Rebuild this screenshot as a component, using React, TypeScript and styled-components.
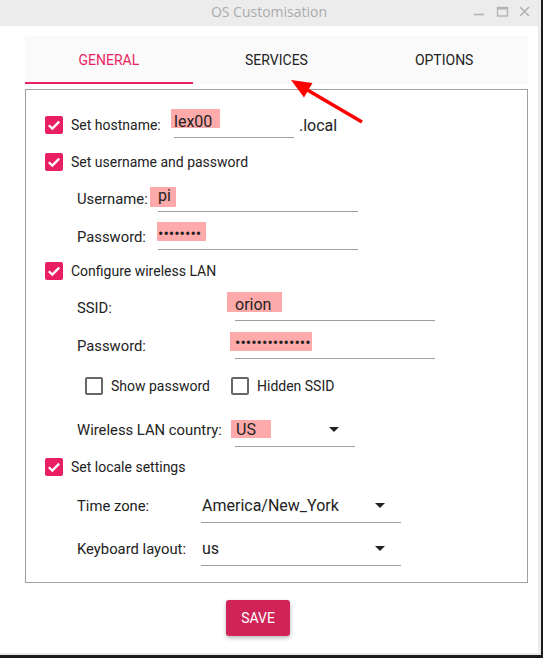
import React from "react";
import styled, { createGlobalStyle } from "styled-components";

const GlobalStyle = createGlobalStyle`
  html, body {
    margin: 0;
    padding: 0;
    background: #1c1c1c;
  }
  body {
    font-family: Roboto, "Liberation Sans", sans-serif;
  }
`;

const PINK = "#e91e63";

const Window = styled.div`
  position: relative;
  width: 538px;
  height: 653px;
  background: #fff;
  border-right: 3px solid #ebebeb;
  border-bottom: 2px solid #ebebeb;
  display: flex;
  flex-direction: column;
`;

const TitleBar = styled.div`
  height: 26px;
  background: #ececec;
  display: grid;
  grid-template-columns: 1fr auto 1fr;
  align-items: center;
`;

const Title = styled.span`
  grid-column: 2;
  margin-bottom: 4px;
  font-family: "Open Sans", sans-serif;
  font-size: 14px;
  color: #ababab;
`;

const Controls = styled.svg`
  grid-column: 3;
  justify-self: end;
  margin-right: 8px;
`;

const Body = styled.div`
  padding: 10px 10px 0 25px;
  display: flex;
  flex-direction: column;
`;

const Tabs = styled.div`
  height: 48px;
  background: #fafafa;
  display: grid;
  grid-template-columns: repeat(3, 1fr);
`;

const Tab = styled.div<{ $active?: boolean }>`
  display: flex;
  align-items: center;
  justify-content: center;
  padding-top: 1px;
  font-size: 14px;
  color: ${(p) => (p.$active ? PINK : "#222")};
  border-bottom: 2px solid ${(p) => (p.$active ? PINK : "transparent")};
`;

const Panel = styled.div`
  margin-top: 5px;
  height: 494px;
  box-sizing: border-box;
  border: 1px solid #9e9e9e;
  padding: 16px 0 0 19px;
  display: flex;
  flex-direction: column;
`;

const Row = styled.div<{ $h: number; $indent?: number }>`
  height: ${(p) => p.$h}px;
  padding-left: ${(p) => p.$indent ?? 0}px;
  display: flex;
  align-items: center;
`;

const Box = styled.span<{ $checked?: boolean }>`
  width: 18px;
  height: 18px;
  box-sizing: border-box;
  border-radius: 2px;
  flex: none;
  display: flex;
  align-items: center;
  justify-content: center;
  background: ${(p) => (p.$checked ? PINK : "#fff")};
  border: ${(p) => (p.$checked ? "none" : "2px solid #676767")};
`;

const CheckText = styled.span<{ $w?: number }>`
  margin-left: 8px;
  font-size: 14px;
  color: #222;
  white-space: nowrap;
  ${(p) => (p.$w ? `width: ${p.$w}px;` : "")}
`;

const Option = styled.span<{ $w?: number }>`
  display: flex;
  align-items: center;
  ${(p) => (p.$w ? `width: ${p.$w}px;` : "")}
`;

const Label = styled.span<{ $w: number }>`
  width: ${(p) => p.$w}px;
  font-size: 14.8px;
  color: #222;
  white-space: nowrap;
`;

const TextField = styled.div<{ $w: number }>`
  position: relative;
  width: ${(p) => p.$w}px;
  height: 26px;
  box-sizing: border-box;
  border-bottom: 1px solid #9e9e9e;
  font-size: 16px;
  line-height: 20px;
  color: #222;
`;

const Combo = styled.div<{ $w: number }>`
  position: relative;
  width: ${(p) => p.$w}px;
  height: 34px;
  box-sizing: border-box;
  border-bottom: 1px solid #9e9e9e;
  padding: 0 16px 0 1px;
  display: flex;
  align-items: center;
  justify-content: space-between;
  font-size: 16px;
  color: #222;
`;

const Value = styled.span`
  position: relative;
`;

const Highlight = styled.span<{ $x: number; $y: number; $w: number; $h: number }>`
  position: absolute;
  left: ${(p) => p.$x}px;
  top: ${(p) => p.$y}px;
  width: ${(p) => p.$w}px;
  height: ${(p) => p.$h}px;
  background: #ffaaaa;
`;

const Suffix = styled.span`
  margin-left: 5px;
  font-size: 16px;
  color: #222;
`;

const Footer = styled.div`
  padding: 17px 0 0 201px;
  display: flex;
`;

const SaveButton = styled.button`
  width: 64px;
  height: 36px;
  border: none;
  border-radius: 3px;
  background: #d02358;
  color: #fff;
  font-family: Roboto, sans-serif;
  font-size: 14px;
  box-shadow: 0 2px 4px rgba(0, 0, 0, 0.28);
`;

const Annotation = styled.svg`
  position: absolute;
  left: 0;
  top: 0;
  pointer-events: none;
`;

const Check: React.FC<{ checked?: boolean }> = ({ checked }) => (
  <Box $checked={checked}>
    {checked && (
      <svg width="18" height="18" viewBox="0 0 18 18">
        <path d="M3.8 9.2 L7.3 12.6 L14.2 5.6" fill="none" stroke="#fff" strokeWidth="2.3" />
      </svg>
    )}
  </Box>
);

const Arrow = () => (
  <svg width="10" height="5" viewBox="0 0 10 5">
    <path d="M0 0 H10 L5 5 Z" fill="#222" />
  </svg>
);

type Mark = { x: number; y: number; w: number; h: number };

const Field: React.FC<{ w: number; value: string; mark?: Mark }> = ({ w, value, mark }) => (
  <TextField $w={w}>
    {mark && <Highlight $x={mark.x} $y={mark.y} $w={mark.w} $h={mark.h} />}
    <Value>{value}</Value>
  </TextField>
);

const Select: React.FC<{ w: number; value: string; mark?: Mark }> = ({ w, value, mark }) => (
  <Combo $w={w}>
    {mark && <Highlight $x={mark.x - 1} $y={mark.y} $w={mark.w} $h={mark.h} />}
    <Value>{value}</Value>
    <Arrow />
  </Combo>
);

const App: React.FC = () => {
  return (
    <>
      <GlobalStyle />
      <Window>
        <TitleBar>
          <Title>OS Customisation</Title>
          <Controls width="58" height="26" viewBox="0 0 58 26">
            <path d="M2 14.5 H12" stroke="#b3b3b3" strokeWidth="1.6" />
            <rect x="25.5" y="7.5" width="10" height="8.5" fill="none" stroke="#b3b3b3" strokeWidth="1.4" />
            <path d="M25.5 8.5 H35.5" stroke="#b3b3b3" strokeWidth="2" />
            <path d="M48 7 L57 16 M57 7 L48 16" stroke="#b3b3b3" strokeWidth="1.6" />
          </Controls>
        </TitleBar>
        <Body>
          <Tabs>
            <Tab $active>GENERAL</Tab>
            <Tab>SERVICES</Tab>
            <Tab>OPTIONS</Tab>
          </Tabs>
          <Panel>
            <Row $h={38}>
              <Check checked />
              <CheckText $w={103}>Set hostname:</CheckText>
              <Field w={120} value="lex00" mark={{ x: -3, y: -3, w: 49, h: 19 }} />
              <Suffix>.local</Suffix>
            </Row>
            <Row $h={36}>
              <Check checked />
              <CheckText>Set username and password</CheckText>
            </Row>
            <Row $h={38} $indent={32}>
              <Label $w={81}>Username:</Label>
              <Field w={200} value="pi" mark={{ x: -8, y: 1, w: 26, h: 20 }} />
            </Row>
            <Row $h={38} $indent={32}>
              <Label $w={81}>Password:</Label>
              <Field w={200} value="••••••••" mark={{ x: -1, y: -2, w: 49, h: 19 }} />
            </Row>
            <Row $h={30}>
              <Check checked />
              <CheckText>Configure wireless LAN</CheckText>
            </Row>
            <Row $h={44} $indent={32}>
              <Label $w={158}>SSID:</Label>
              <Field w={200} value="orion" mark={{ x: -8, y: -3, w: 55, h: 20 }} />
            </Row>
            <Row $h={32} $indent={32}>
              <Label $w={158}>Password:</Label>
              <Field w={200} value="••••••••••••••" mark={{ x: -5, y: -1, w: 82, h: 19 }} />
            </Row>
            <Row $h={48} $indent={40}>
              <Option $w={146}>
                <Check />
                <CheckText>Show password</CheckText>
              </Option>
              <Option>
                <Check />
                <CheckText>Hidden SSID</CheckText>
              </Option>
            </Row>
            <Row $h={40} $indent={32}>
              <Label $w={158}>Wireless LAN country:</Label>
              <Select w={120} value="US" mark={{ x: -3, y: 7, w: 40, h: 18 }} />
            </Row>
            <Row $h={34}>
              <Check checked />
              <CheckText>Set locale settings</CheckText>
            </Row>
            <Row $h={44} $indent={32}>
              <Label $w={124}>Time zone:</Label>
              <Select w={200} value="America/New_York" />
            </Row>
            <Row $h={42} $indent={32}>
              <Label $w={124}>Keyboard layout:</Label>
              <Select w={200} value="us" />
            </Row>
          </Panel>
          <Footer>
            <SaveButton>SAVE</SaveButton>
          </Footer>
        </Body>
        <Annotation width="543" height="658" viewBox="0 0 543 658">
          <path d="M362 122 L304 88" stroke="#ff0000" strokeWidth="3.5" />
          <polygon points="291,80 312.5,83 304,97.5" fill="#ff0000" />
        </Annotation>
      </Window>
    </>
  );
};

export default App;
